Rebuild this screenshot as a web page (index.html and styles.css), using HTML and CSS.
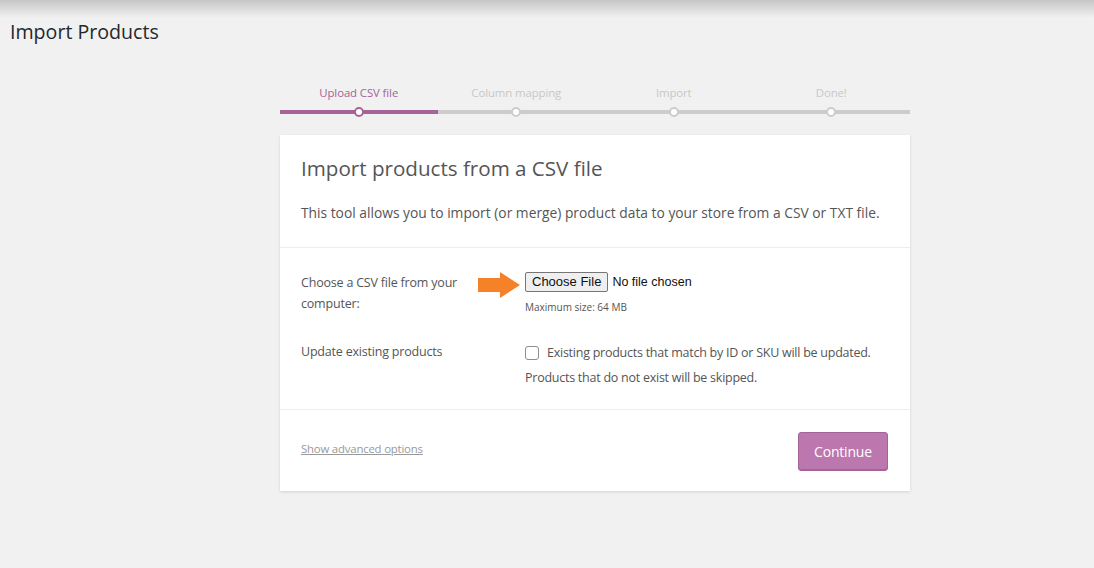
FILE: index.html
```html
<!DOCTYPE html>
<html>
<head>
<meta charset="utf-8">
<link rel="stylesheet" href="styles.css">
</head>
<body>
<div class="topshade"></div>
<h1 class="page-title">Import Products</h1>
<div class="wrap">
  <ol class="steps">
    <li class="step active"><span class="label">Upload CSV file</span><span class="track"><span class="dot"></span></span></li>
    <li class="step"><span class="label">Column mapping</span><span class="track"><span class="dot"></span></span></li>
    <li class="step"><span class="label">Import</span><span class="track"><span class="dot"></span></span></li>
    <li class="step"><span class="label">Done!</span><span class="track"><span class="dot"></span></span></li>
  </ol>
  <div class="card">
    <header class="card-head">
      <h2>Import products from a CSV file</h2>
      <p>This tool allows you to import (or merge) product data to your store from a CSV or TXT file.</p>
    </header>
    <section class="card-body">
      <div class="row">
        <div class="row-label">Choose a CSV file from your computer:</div>
        <div class="row-field">
          <div class="file-line">
            <svg class="arrow" width="44" height="26" viewBox="0 0 44 26"><polygon points="0,6 22,6 22,0 42,13 22,26 22,20 0,20" fill="#f58228"/></svg>
            <span class="file-btn">Choose File</span><span class="file-none">No file chosen</span>
          </div>
          <div class="max-size">Maximum size: 64 MB</div>
        </div>
      </div>
      <div class="row row2">
        <div class="row-label">Update existing products</div>
        <div class="row-field">
          <div class="check-line"><span class="checkbox"></span><span>Existing products that match by ID or SKU will be updated.</span></div>
          <div class="check-note">Products that do not exist will be skipped.</div>
        </div>
      </div>
    </section>
    <footer class="card-foot">
      <a class="adv" href="#">Show advanced options</a>
      <span class="continue">Continue</span>
    </footer>
  </div>
</div>
</body>
</html>
```

FILE: styles.css
```css
html, body {
  margin: 0;
  padding: 0;
  background: #f1f1f1;
  font-family: "Segoe UI", "Open Sans", "Noto Sans", sans-serif;
  color: #555;
}
body {
  position: relative;
  height: 568px;
  overflow: hidden;
}
.topshade {
  position: absolute;
  left: 0;
  right: 0;
  top: 0;
  height: 18px;
  background: linear-gradient(#c6c6c6, #f1f1f1);
}
.page-title {
  position: relative;
  margin: 0;
  padding: 18px 0 0 10px;
  font-size: 19.6px;
  font-weight: 400;
  color: #23282d;
  line-height: 28px;
}
.wrap {
  width: 630px;
  margin: 39px 0 0 280px;
}
.steps {
  display: flex;
  list-style: none;
  margin: 0;
  padding: 0;
}
.step {
  flex: 1;
  display: flex;
  flex-direction: column;
  align-items: center;
}
.label {
  font-size: 11.4px;
  letter-spacing: -0.1px;
  line-height: 16px;
  color: #c8c8c8;
  height: 16px;
}
.step.active .label { color: #a46497; }
.track {
  position: relative;
  align-self: stretch;
  height: 4px;
  margin-top: 9px;
  background: #ccc;
}
.step.active .track { background: #a46497; }
.dot {
  position: absolute;
  left: 50%;
  top: -3px;
  width: 6px;
  height: 6px;
  margin-left: -5px;
  border: 2px solid #ccc;
  border-radius: 50%;
  background: #fff;
}
.step.active .dot { border-color: #a46497; }
.card {
  margin-top: 21px;
  background: #fff;
  box-shadow: 0 1px 3px rgba(0,0,0,0.13);
}
.card-head {
  padding: 20px 21px 24px;
  border-bottom: 1px solid #eee;
}
.card-head h2 {
  margin: 0;
  font-size: 20.6px;
  font-weight: 400;
  line-height: 26px;
  color: #555;
}
.card-head p {
  margin: 22px 0 0;
  font-size: 13.8px;
  line-height: 20px;
}
.card-body {
  padding: 24px 21px 20px;
  border-bottom: 1px solid #eee;
}
.row {
  display: flex;
}
.row2 { margin-top: 27px; }
.row-label {
  width: 170px;
  margin-right: 54px;
  font-size: 12.5px;
  letter-spacing: -0.2px;
  line-height: 21px;
}
.row-field {
  flex: 1;
  font-size: 12.5px;
  letter-spacing: -0.25px;
}
.file-line {
  position: relative;
  display: flex;
  align-items: center;
}
.arrow {
  position: absolute;
  left: -47px;
  top: 0px;
}
.file-btn {
  font-family: "Liberation Sans", Arial, sans-serif;
  font-size: 13px;
  letter-spacing: 0;
  color: #111;
  background: #efefef;
  border: 1px solid #767676;
  border-radius: 2px;
  padding: 1px 6px;
  line-height: 16px;
}
.file-none {
  font-family: "Liberation Sans", Arial, sans-serif;
  font-size: 12.5px;
  letter-spacing: 0;
  color: #111;
  margin-left: 4px;
}
.max-size {
  font-size: 10px;
  line-height: 14px;
  letter-spacing: 0;
  margin-top: 8px;
  color: #555;
}
.check-line {
  display: flex;
  align-items: center;
  line-height: 22px;
  margin-top: 1px;
}
.checkbox {
  width: 12px;
  height: 12px;
  border: 1px solid #8c8f94;
  border-radius: 3px;
  margin-right: 8px;
}
.check-note {
  margin-top: 3px;
  line-height: 22px;
}
.card-foot {
  display: flex;
  justify-content: space-between;
  align-items: center;
  padding: 22px 22px 20px 21px;
}
.adv {
  font-size: 11.4px;
  letter-spacing: -0.2px;
  color: #999;
  margin-bottom: 6px;
}
.continue {
  width: 88px;
  height: 37px;
  line-height: 37px;
  text-align: center;
  background: #bb77ae;
  border: 1px solid #a36597;
  border-radius: 3px;
  color: #fff;
  font-size: 14px;
  letter-spacing: -0.2px;
  box-shadow: inset 0 -1px 0 #a36597;
}
```
